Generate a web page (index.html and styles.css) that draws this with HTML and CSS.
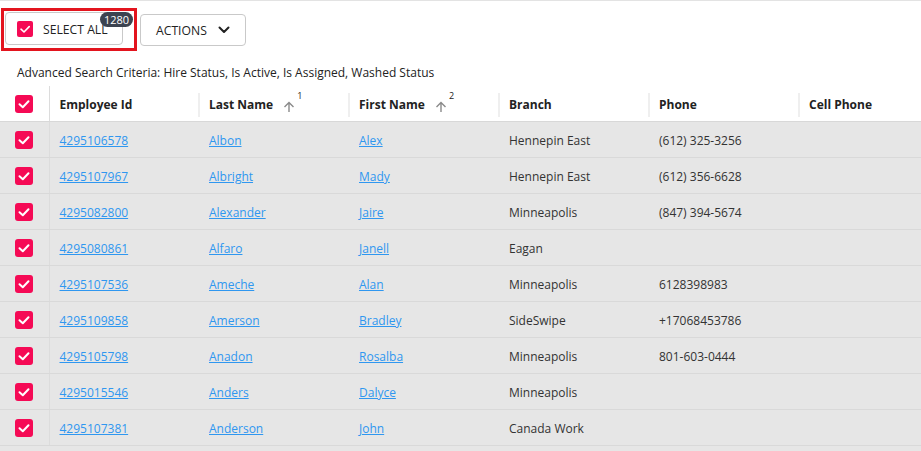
FILE: index.html
```html
<!DOCTYPE html>
<html>
<head>
<meta charset="utf-8">
<link rel="stylesheet" href="styles.css">
</head>
<body>
<div class="toolbar">
  <div class="highlight">
    <button class="select-all">
      <span class="cb"><svg viewBox="0 0 16 16" width="16" height="16"><polyline points="4,8.2 7,11 12.2,5.6" fill="none" stroke="#fff" stroke-width="1.6" stroke-linecap="round" stroke-linejoin="round"/></svg></span>
      <span class="btn-label">SELECT ALL</span>
      <span class="badge">1280</span>
    </button>
  </div>
  <button class="actions">
    <span class="btn-label">ACTIONS</span>
    <svg class="chev" viewBox="0 0 12 8" width="12" height="8"><polyline points="1.5,1.5 6,6 10.5,1.5" fill="none" stroke="#222" stroke-width="2" stroke-linecap="round" stroke-linejoin="round"/></svg>
  </button>
</div>
<div class="criteria">Advanced Search Criteria: Hire Status, Is Active, Is Assigned, Washed Status</div>
<div class="grid-wrap">
<table class="grid">
  <colgroup>
    <col class="c-check"><col class="c-col"><col class="c-col"><col class="c-col"><col class="c-col"><col class="c-col"><col class="c-col">
  </colgroup>
  <thead>
    <tr>
      <th class="chk"><span class="cb big"><svg viewBox="0 0 18 18" width="18" height="18"><polyline points="4.5,9.2 7.8,12.2 13.5,6.2" fill="none" stroke="#fff" stroke-width="2" stroke-linecap="round" stroke-linejoin="round"/></svg></span></th>
      <th class="first">Employee Id</th>
      <th>Last Name <span class="sort"><svg viewBox="0 0 12 12" width="12" height="12"><path d="M6 11V1.5M1.5 6L6 1.5L10.5 6" fill="none" stroke="#8a8a8a" stroke-width="1.4"/></svg><sup>1</sup></span></th>
      <th>First Name <span class="sort"><svg viewBox="0 0 12 12" width="12" height="12"><path d="M6 11V1.5M1.5 6L6 1.5L10.5 6" fill="none" stroke="#8a8a8a" stroke-width="1.4"/></svg><sup>2</sup></span></th>
      <th>Branch</th>
      <th>Phone</th>
      <th>Cell Phone</th>
    </tr>
  </thead>
  <tbody id="rows"></tbody>
</table>
</div>
<script src="app.js"></script>
</body>
</html>
```
FILE: app.js
```js
var data = [
  ["4295106578","Albon","Alex","Hennepin East","(612) 325-3256"],
  ["4295107967","Albright","Mady","Hennepin East","(612) 356-6628"],
  ["4295082800","Alexander","Jaire","Minneapolis","(847) 394-5674"],
  ["4295080861","Alfaro","Janell","Eagan",""],
  ["4295107536","Ameche","Alan","Minneapolis","6128398983"],
  ["4295109858","Amerson","Bradley","SideSwipe","+17068453786"],
  ["4295105798","Anadon","Rosalba","Minneapolis","801-603-0444"],
  ["4295015546","Anders","Dalyce","Minneapolis",""],
  ["4295107381","Anderson","John","Canada Work",""]
];
var check = '<span class="cb big"><svg viewBox="0 0 18 18" width="18" height="18"><polyline points="4.5,9.2 7.8,12.2 13.5,6.2" fill="none" stroke="#fff" stroke-width="2" stroke-linecap="round" stroke-linejoin="round"/></svg></span>';
var html = "";
data.forEach(function (r) {
  html += '<tr><td class="chk">' + check + '</td>' +
    '<td><a href="#">' + r[0] + '</a></td>' +
    '<td><a href="#">' + r[1] + '</a></td>' +
    '<td><a href="#">' + r[2] + '</a></td>' +
    '<td>' + r[3] + '</td>' +
    '<td>' + r[4] + '</td>' +
    '<td></td></tr>';
});
document.getElementById("rows").innerHTML = html;
```
FILE: styles.css
```css
html, body {
  margin: 0;
  padding: 0;
}
body {
  font-family: "Open Sans", "Liberation Sans", sans-serif;
  color: #222;
  border-top: 1px solid #e3e3e3;
  height: 450px;
  overflow: hidden;
  background: #fff;
  display: flex;
  flex-direction: column;
}
.toolbar {
  display: flex;
  align-items: center;
  gap: 3px;
  padding: 7px 0 0 1px;
}
.highlight {
  border: 3px solid #e3141e;
  padding: 1px 11px 3px 1px;
}
button {
  font-family: inherit;
  background: #fff;
  cursor: pointer;
  color: #222;
}
.select-all {
  position: relative;
  display: flex;
  align-items: center;
  gap: 10px;
  width: 118px;
  height: 33px;
  padding: 0 0 0 11px;
  border: 1px solid #c9c9c9;
  border-radius: 4px;
}
.btn-label {
  font-size: 12.2px;
  padding-top: 1px;
}
.cb {
  display: inline-flex;
  width: 16px;
  height: 16px;
  border-radius: 2px;
  background: #f50a55;
  flex: none;
}
.cb.big {
  width: 18px;
  height: 18px;
  border-radius: 3px;
}
.badge {
  position: absolute;
  top: -1px;
  left: 94px;
  width: 33px;
  height: 15px;
  line-height: 15px;
  border-radius: 8px;
  background: #3c4350;
  color: #fff;
  font-size: 11px;
  text-align: center;
}
.actions {
  display: flex;
  align-items: center;
  justify-content: space-between;
  width: 106px;
  height: 32px;
  padding: 0 15px 0 15px;
  border: 1px solid #c9c9c9;
  border-radius: 4px;
}
.criteria {
  padding: 14px 0 0 17px;
  font-size: 12px;
  line-height: 16px;
  color: #222;
  margin-bottom: 5px;
}
.grid-wrap {
  flex: 1;
  min-height: 0;
  width: 100%;
  overflow: hidden;
  background: #e6e6e6;
}
.grid {
  border-collapse: collapse;
  table-layout: fixed;
  width: 949px;
}
.c-check { width: 49px; }
.c-col { width: 150px; }
.grid th {
  position: relative;
  height: 33px;
  padding: 2px 10px 0;
  text-align: left;
  font-size: 12px;
  font-weight: 700;
  color: #222;
  background: #fff;
  border-bottom: 1px solid #d8d8d8;
  white-space: nowrap;
}
.grid th::before {
  content: "";
  position: absolute;
  left: -1px;
  top: 7px;
  width: 2px;
  height: 24px;
  background: #efefef;
}
.grid th.chk::before,
.grid th.first::before {
  display: none;
}
.grid .chk {
  padding: 0;
  height: 35px;
  text-align: center;
  border-right: 1px solid #dcdcdc;
  vertical-align: middle;
}
.grid .chk .cb {
  vertical-align: middle;
}
.sort {
  display: inline-flex;
  align-items: flex-start;
  margin-left: 7px;
  vertical-align: middle;
}
.sort svg {
  margin-top: 2px;
}
.sort sup {
  font-size: 9px;
  font-weight: 400;
  line-height: 1;
  margin-left: 2px;
  margin-top: -8px;
}
.grid td {
  height: 33px;
  padding: 2px 10px 0;
  font-size: 12px;
  color: #333;
  background: #e6e6e6;
  border-bottom: 1px solid #d9d9d9;
  white-space: nowrap;
}
.grid td a {
  color: #2f97f0;
  text-decoration: underline;
}
```
